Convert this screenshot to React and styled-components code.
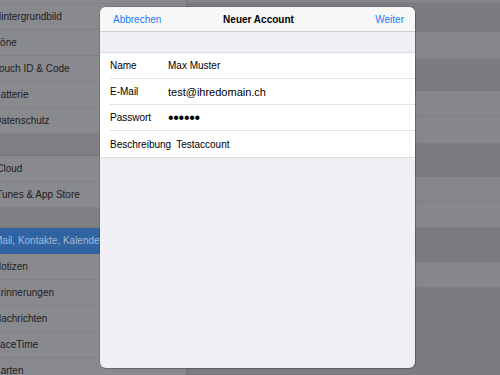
import React from "react";
import styled, { createGlobalStyle } from "styled-components";

const Global = createGlobalStyle`
  html, body { margin: 0; padding: 0; background: #7b7c80; }
  body { font-family: "Liberation Sans", Arial, sans-serif; }
`;

const Screen = styled.div`
  position: relative;
  width: 500px;
  height: 375px;
  overflow: hidden;
  display: flex;
  background: #7b7c80;
`;

const Sidebar = styled.div`
  width: 186px;
  flex: none;
  display: flex;
  flex-direction: column;
  background: #7e7f83;
  border-right: 1px solid #6f7074;
  overflow: hidden;
`;

const SideCell = styled.div`
  flex: none;
  height: ${(p) => p.$h || 26}px;
  box-sizing: border-box;
  display: flex;
  align-items: center;
  background: ${(p) => (p.$selected ? "#3063a1" : "#898a8e")};
  border-bottom: 1px solid ${(p) => (p.$selected ? "#3063a1" : "#7f8084")};
  color: ${(p) => (p.$selected ? "#a3b9d8" : "#1c1c1e")};
  font-size: 10px;
  white-space: nowrap;
`;

const SideLabel = styled.span`
  margin-left: -6px;
`;

const Gap = styled.div`
  flex: none;
  height: ${(p) => p.$h}px;
  box-sizing: border-box;
  border-bottom: 1px solid #76777b;
`;

const Detail = styled.div`
  flex: 1;
  display: flex;
  flex-direction: column;
`;

const Band = styled.div`
  flex: none;
  height: ${(p) => p.$h}px;
  box-sizing: border-box;
  background: ${(p) => (p.$light ? "#86878b" : "#7b7c80")};
  border-bottom: 1px solid ${(p) => (p.$light ? "#7f8084" : "#77787c")};
`;

const Modal = styled.div`
  position: absolute;
  left: 100px;
  top: 7px;
  width: 315px;
  height: 361px;
  border-radius: 6px;
  overflow: hidden;
  background: #efeff4;
  box-shadow: 0 0 0 0.5px rgba(0, 0, 0, 0.25), 1px 1px 1px rgba(0, 0, 0, 0.15);
  display: flex;
  flex-direction: column;
`;

const Header = styled.div`
  height: 25px;
  flex: none;
  box-sizing: border-box;
  display: grid;
  grid-template-columns: 1fr auto 1fr;
  align-items: center;
  padding: 0 11px 0 13px;
  background: #f7f7f8;
  border-bottom: 1px solid #cfcfd3;
  font-size: 10px;
`;

const NavButton = styled.span`
  color: #1a7cf5;
  justify-self: ${(p) => (p.$end ? "end" : "start")};
`;

const Title = styled.span`
  font-weight: bold;
  color: #000;
`;

const Spacer = styled.div`
  height: 20px;
  flex: none;
`;

const Group = styled.div`
  background: #fff;
  border-top: 1px solid #dcdce0;
  border-bottom: 1px solid #dcdce0;
  padding-left: 10px;
`;

const Row = styled.div`
  height: 26px;
  box-sizing: border-box;
  display: flex;
  align-items: center;
  border-bottom: ${(p) => (p.$last ? "none" : "1px solid #e3e3e7")};
  font-size: 10px;
  color: #000;
`;

const Label = styled.span`
  min-width: 53px;
  margin-right: 5px;
  white-space: nowrap;
`;

const Value = styled.span`
  font-size: ${(p) => p.$size || 10}px;
  letter-spacing: ${(p) => p.$spacing || 0}px;
  white-space: nowrap;
`;

const sidebar = [
  { h: 4 },
  { label: "Hintergrundbild" },
  { label: "Töne" },
  { label: "Touch ID & Code" },
  { label: "Batterie" },
  { label: "Datenschutz" },
  { gap: 22 },
  { label: "iCloud" },
  { label: "iTunes & App Store" },
  { gap: 20 },
  { label: "Mail, Kontakte, Kalender", selected: true },
  { label: "Notizen" },
  { label: "Erinnerungen" },
  { label: "Nachrichten" },
  { label: "FaceTime" },
  { label: "Karten" },
];

const bands = [
  [3, true],
  [29, false],
  [27, true],
  [32, false],
  [26, true],
  [27, true],
  [33, false],
  [25, true],
  [26, true],
  [34, false],
  [26, true],
  [90, false],
];

const fields = [
  { label: "Name", value: "Max Muster" },
  { label: "E-Mail", value: "test@ihredomain.ch", size: 11 },
  { label: "Passwort", value: "••••••", size: 16, spacing: -0.3 },
  { label: "Beschreibung", value: "Testaccount" },
];

export default function App() {
  return (
    <>
      <Global />
      <Screen>
        <Sidebar>
          {sidebar.map((it, i) =>
            it.gap ? (
              <Gap key={i} $h={it.gap} />
            ) : (
              <SideCell key={i} $h={it.h} $selected={it.selected}>
                {it.label && <SideLabel>{it.label}</SideLabel>}
              </SideCell>
            )
          )}
        </Sidebar>
        <Detail>
          {bands.map(([h, light], i) => (
            <Band key={i} $h={h} $light={light} />
          ))}
        </Detail>
        <Modal>
          <Header>
            <NavButton>Abbrechen</NavButton>
            <Title>Neuer Account</Title>
            <NavButton $end>Weiter</NavButton>
          </Header>
          <Spacer />
          <Group>
            {fields.map((f, i) => (
              <Row key={f.label} $last={i === fields.length - 1}>
                <Label>{f.label}</Label>
                <Value $size={f.size} $spacing={f.spacing}>
                  {f.value}
                </Value>
              </Row>
            ))}
          </Group>
        </Modal>
      </Screen>
    </>
  );
}
